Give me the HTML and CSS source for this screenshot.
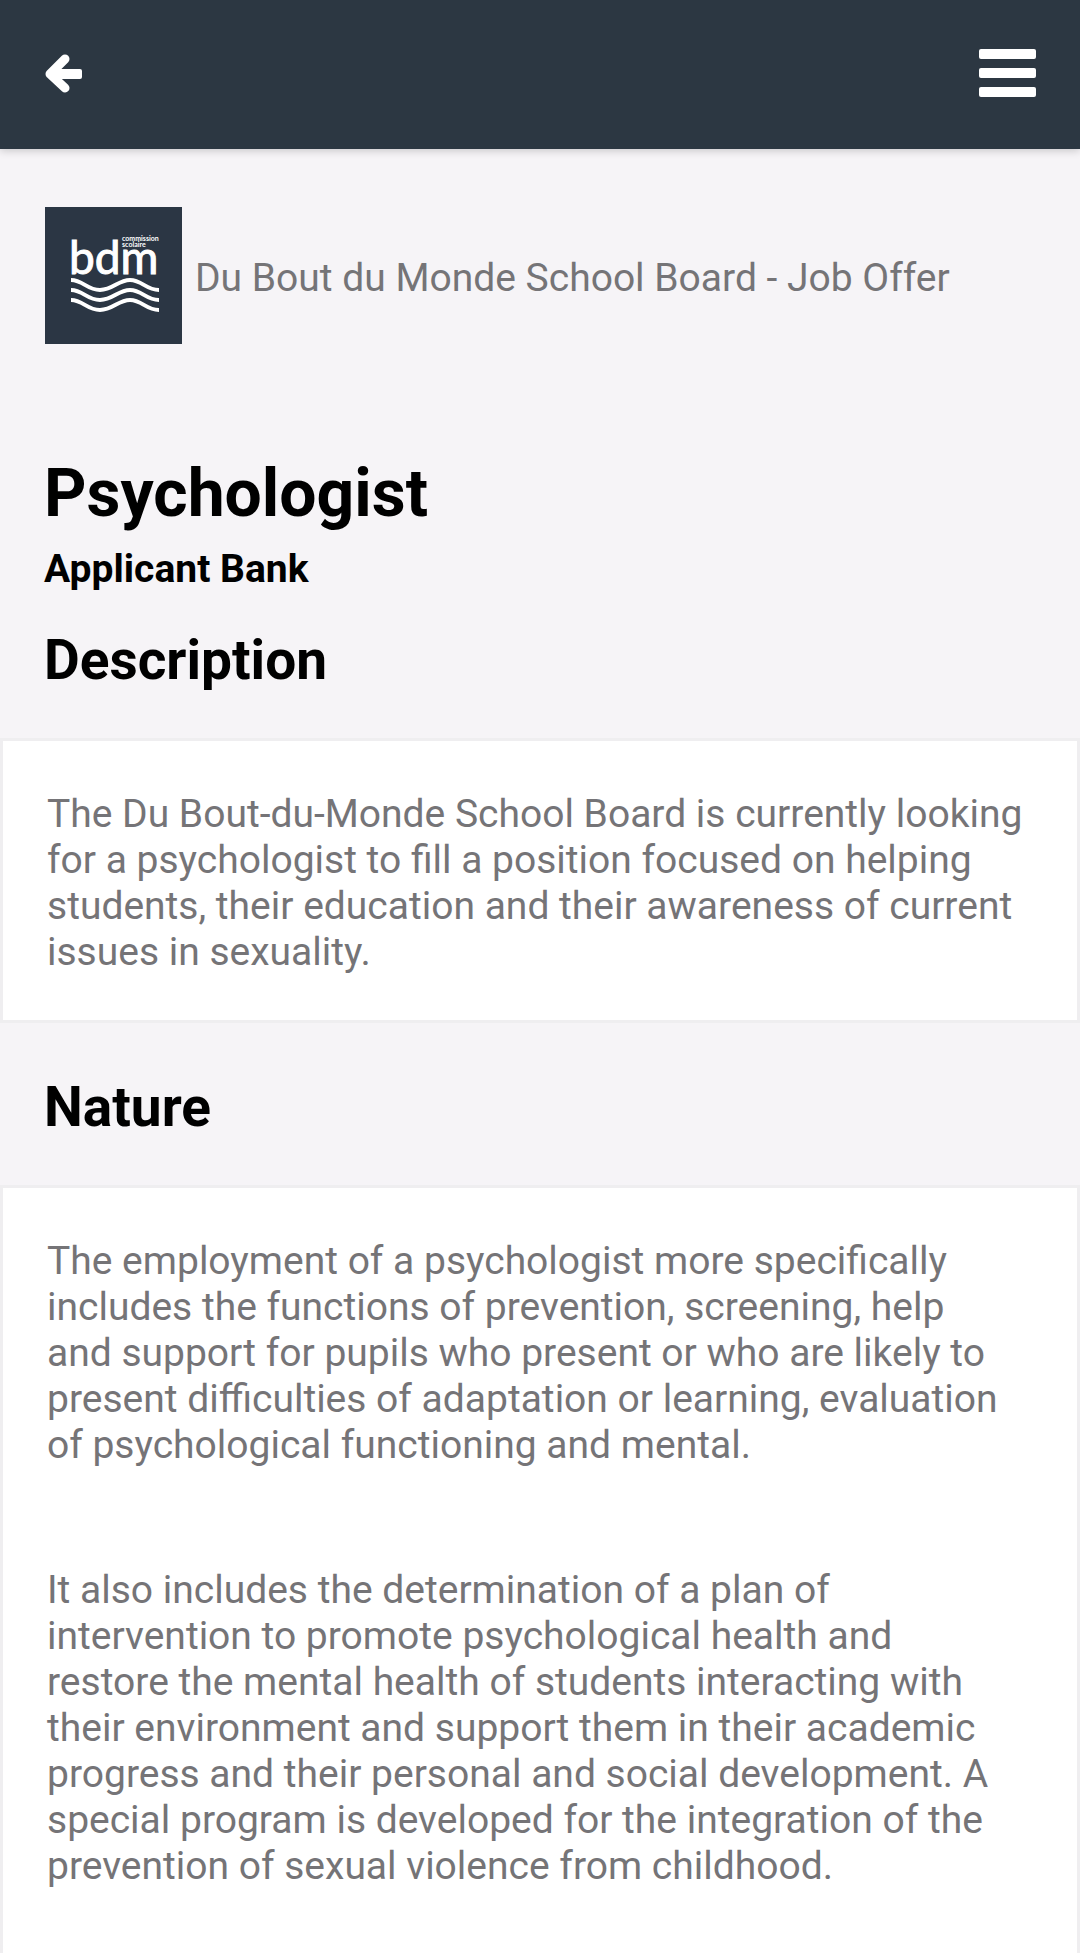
FILE: index.html
```html
<!DOCTYPE html>
<html lang="en">
<head>
  <meta charset="UTF-8">
  <meta name="viewport" content="width=device-width, initial-scale=1.0">
  <title>Psychologist - Job Offer</title>
  <link rel="stylesheet" href="styles.css">
</head>
<body>
  <header class="topbar">
    <button class="icon-btn" type="button" aria-label="Back">
      <svg width="37" height="40" viewBox="0 0 37 40">
        <path d="M20 6 L5 21 L20 35" fill="none" stroke="#fff" stroke-width="9" stroke-linecap="round" stroke-linejoin="round"/>
        <rect x="8" y="16" width="29" height="10" rx="2" fill="#fff"/>
      </svg>
    </button>
    <button class="icon-btn" type="button" aria-label="Menu">
      <svg width="57" height="48" viewBox="0 0 57 48" fill="#fff">
        <rect y="0" width="57" height="10" rx="2"/>
        <rect y="19" width="57" height="10" rx="2"/>
        <rect y="38" width="57" height="10" rx="2"/>
      </svg>
    </button>
  </header>

  <main>
    <div class="board">
      <svg class="logo" viewBox="0 0 137 137" role="img" aria-label="Commission scolaire bdm">
        <rect width="137" height="137" fill="#2b3644"/>
        <text class="logo-name" x="24" y="67">bdm</text>
        <text class="logo-small" x="77" y="34">commission</text>
        <text class="logo-small" x="77" y="40">scolaire</text>
        <g fill="none" stroke="#fff" stroke-width="4">
          <path d="M26 73 C38 73 42 83 55 83 S73 73 85 73 S101 83 114 83"/>
          <path d="M26 83 C38 83 42 93 55 93 S73 83 85 83 S101 93 114 93"/>
          <path d="M26 93 C38 93 42 103 55 103 S73 93 85 93 S101 103 114 103"/>
        </g>
      </svg>
      <p class="board-name">Du Bout du Monde School Board - Job Offer</p>
    </div>

    <h1>Psychologist</h1>
    <p class="status">Applicant Bank</p>

    <h2>Description</h2>
    <section class="card">
      <p>The Du Bout-du-Monde School Board is currently looking for a psychologist to fill a position focused on helping students, their education and their awareness of current issues in sexuality.</p>
    </section>

    <h2 class="spaced">Nature</h2>
    <section class="card card-last">
      <p>The employment of a psychologist more specifically includes the functions of prevention, screening, help<br> and support for pupils who present or who are likely to present difficulties of adaptation or learning, evaluation of psychological functioning and mental.</p>
      <p>It also includes the determination of a plan of intervention to promote psychological health and<br> restore the mental health of students interacting with their environment and support them in their academic progress and their personal and social development. A special program is developed for the integration of the prevention of sexual violence from childhood.</p>
    </section>
  </main>
</body>
</html>
```
FILE: styles.css
```css
* {
  box-sizing: border-box;
}

body {
  margin: 0;
  min-height: 100vh;
  display: flex;
  flex-direction: column;
  background: #f6f4f7;
  color: #757477;
  font-family: Roboto, "Liberation Sans", sans-serif;
  font-size: 39px;
  line-height: 46px;
}

h1, h2, p {
  margin: 0;
}

.topbar {
  display: flex;
  align-items: center;
  justify-content: space-between;
  height: 149px;
  padding: 0 44px 4px 45px;
  background: #2c3742;
  box-shadow: 0 2px 8px rgba(0, 0, 0, 0.18);
}

.icon-btn {
  padding: 0;
  border: none;
  background: none;
  cursor: pointer;
}

.icon-btn svg {
  display: block;
}

main {
  flex: 1;
  display: flex;
  flex-direction: column;
}

.board {
  display: flex;
  align-items: center;
  gap: 13px;
  padding: 58px 45px 0;
}

.board-name {
  padding-top: 4px;
}

.logo {
  width: 137px;
  height: 137px;
  flex-shrink: 0;
}

.logo-name {
  fill: #fff;
  stroke: #fff;
  stroke-width: 1px;
  font-family: Lato, sans-serif;
  font-size: 46px;
}

.logo-small {
  fill: #fff;
  font-family: Lato, sans-serif;
  font-size: 7px;
  font-weight: bold;
}

h1 {
  margin-top: 111px;
  padding: 0 44px;
  color: #000;
  font-size: 66px;
  line-height: 78px;
}

.status {
  padding: 0 44px;
  margin-top: 13px;
  color: #000;
  font-weight: bold;
}

h2 {
  margin: 36px 0 46px;
  padding: 0 44px;
  color: #000;
  font-size: 55px;
  line-height: 64px;
}

.spaced {
  margin-top: 52px;
}

.card {
  padding: 50px 44px 45px;
  border: 3px solid #efeef0;
  background: #fff;
}

.card p + p {
  margin-top: 99px;
}

/* runs on to the bottom of the screen */
.card-last {
  flex: 1;
  border-bottom: none;
}
```
